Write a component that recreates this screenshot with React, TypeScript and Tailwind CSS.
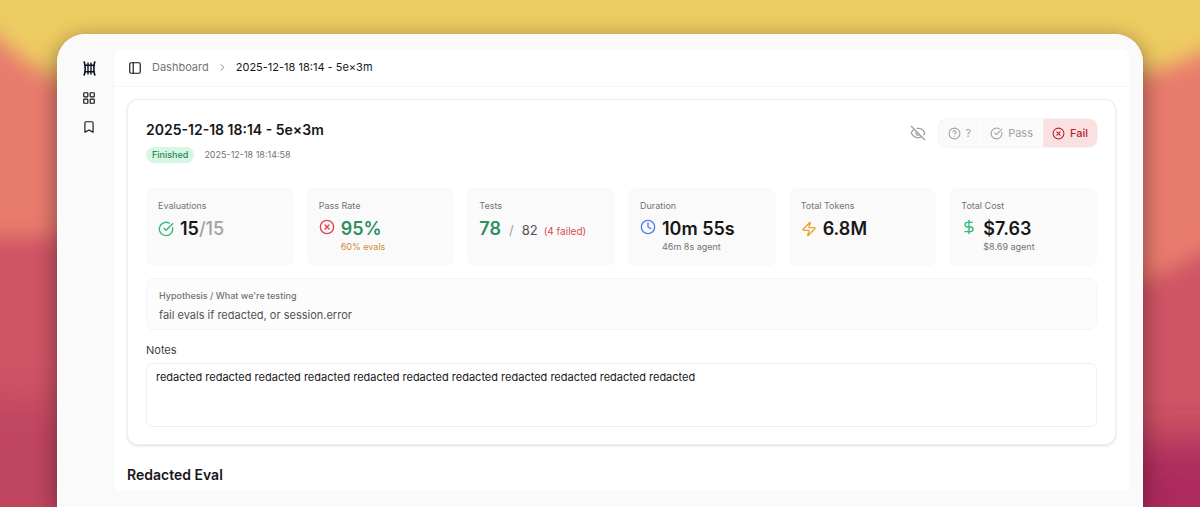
import type { ReactNode } from 'react';
import {
  Bookmark,
  ChevronRight,
  CircleCheckBig,
  CircleHelp,
  CircleX,
  Clock,
  DollarSign,
  EyeOff,
  LayoutGrid,
  PanelLeft,
  Zap,
} from 'lucide-react';
import { cva } from 'class-variance-authority';

const RUN_NAME = '2025-12-18 18:14 - 5e×3m';
const NOTES = Array(11).fill('redacted').join(' ');

export default function App() {
  return (
    <div className="relative flex min-h-screen flex-col overflow-hidden px-[57px] pt-[34px] font-['Inter','Liberation_Sans',sans-serif] text-neutral-900">
      <Wallpaper />
      <div className="relative flex flex-1 rounded-t-[28px] border-x border-t border-white bg-[#fafafa] pr-[13px] pt-[14px] pb-[17px] shadow-[0_6px_22px_rgba(40,10,20,0.5)]">
        <Sidebar />
        <div className="flex min-w-0 flex-1 flex-col rounded-t-lg border-l border-neutral-100 bg-white">
          <Header />
          <main className="flex flex-col gap-5 px-[13px] pt-3 pb-1">
            <RunCard />
            <h2 className="text-[14px] leading-5 font-semibold">Redacted Eval</h2>
          </main>
        </div>
      </div>
    </div>
  );
}

function Wallpaper() {
  return (
    <svg
      className="absolute inset-0 h-full w-full"
      viewBox="0 0 1200 507"
      preserveAspectRatio="none"
      aria-hidden
    >
      <defs>
        <filter id="soft" x="-20%" y="-20%" width="140%" height="140%">
          <feGaussianBlur stdDeviation="10" />
        </filter>
        <filter id="softer" x="-20%" y="-20%" width="140%" height="140%">
          <feGaussianBlur stdDeviation="22" />
        </filter>
      </defs>
      <rect width="1200" height="507" fill="#edcc62" />
      <path
        d="M-60 0 L0 40 C20 58 40 74 80 86 L1120 82 C1150 72 1175 66 1200 54 L1260 24 V600 H-60Z"
        fill="#e87b6d"
        filter="url(#soft)"
      />
      <path d="M-60 237 H90 L1110 288 C1150 280 1175 270 1200 254 L1260 220 V600 H-60Z" fill="#cf5565" filter="url(#soft)" />
      <path d="M-60 400 H60 L110 440 H600 V620 H-60Z" fill="#bf4461" filter="url(#softer)" />
      <path d="M600 440 H1140 L1260 438 V620 H600Z" fill="#ac2b5b" filter="url(#softer)" />
    </svg>
  );
}

function Logo() {
  return (
    <svg viewBox="0 0 13 15" className="h-[15px] w-[13px]" fill="none" stroke="#0b1020" aria-hidden>
      <path d="M.8 .5C2.600 3 2.600 12 .8 14.500M12.200 .5C10.400 3 10.400 12 12.200 14.500" strokeWidth="1.600" />
      <path d="M5 1.500v12M8 1.500v12" strokeWidth="1.400" />
      <path d="M1.500 4.200h10M1.500 10.800h10" strokeWidth="1.400" />
    </svg>
  );
}

function Sidebar() {
  return (
    <nav className="flex w-[55px] flex-col items-center gap-[15px] pt-3 pl-[7px]" aria-label="Main">
      <a href="#home" aria-label="Home">
        <Logo />
      </a>
      <a href="#dashboard" aria-label="Dashboard">
        <LayoutGrid className="size-[14px]" aria-hidden />
      </a>
      <a href="#bookmarks" aria-label="Bookmarks">
        <Bookmark className="size-[14px]" aria-hidden />
      </a>
    </nav>
  );
}

function Header() {
  return (
    <header className="flex h-[38px] items-center gap-[10px] border-b border-neutral-100 px-[14px] text-[11px]">
      <button type="button" aria-label="Toggle sidebar">
        <PanelLeft className="size-[14px]" aria-hidden />
      </button>
      <nav className="flex items-center gap-2" aria-label="Breadcrumb">
        <a href="#dashboard" className="text-neutral-500">
          Dashboard
        </a>
        <ChevronRight className="size-[11px] text-neutral-500" aria-hidden />
        <span aria-current="page">{RUN_NAME}</span>
      </nav>
    </header>
  );
}

function RunCard() {
  return (
    <section className="flex flex-col rounded-[11px] border border-neutral-200/60 bg-white px-[18px] pt-[18px] pb-[17px] shadow-sm">
      <div className="flex items-start justify-between">
        <div>
          <h1 className="text-[14px] leading-6 font-semibold">{RUN_NAME}</h1>
          <div className="mt-[5px] flex items-center gap-[10px] text-[9px] leading-4">
            <span className="rounded-full bg-[#d5f7e3] px-[6px] font-medium text-[#2f855a]">Finished</span>
            <time className="text-neutral-500">2025-12-18 18:14:58</time>
          </div>
        </div>
        <div className="flex items-center gap-[13px] pt-px">
          <button type="button" aria-label="Hide run" className="text-neutral-400">
            <EyeOff className="size-4" aria-hidden />
          </button>
          <VerdictPicker />
        </div>
      </div>

      <div className="mt-[25px] grid grid-cols-6 gap-[13px]">
        <Stat label="Evaluations" icon={<CircleCheckBig className="size-4 text-[#35b779]" aria-hidden />}>
          15<span className="font-medium text-neutral-400">/15</span>
        </Stat>
        <Stat
          label="Pass Rate"
          icon={<CircleX className="size-4 text-[#e0434f]" aria-hidden />}
          note={<span className="text-[#d08a2e]">60% evals</span>}
        >
          <span className="text-[#2f8f61]">95%</span>
        </Stat>
        <Stat label="Tests">
          <span className="text-[#2f8f61]">78</span>
          <span className="ml-2 text-[13px] font-normal text-neutral-400">/</span>
          <span className="ml-2 text-[13px] font-normal text-neutral-600">82</span>
          <span className="ml-[6px] text-[10px] font-normal text-[#dc4a50]">(4 failed)</span>
        </Stat>
        <Stat label="Duration" icon={<Clock className="size-4 text-[#4f7df0]" aria-hidden />} note="46m 8s agent">
          10m 55s
        </Stat>
        <Stat label="Total Tokens" icon={<Zap className="size-4 text-[#f0a030]" aria-hidden />}>
          6.8M
        </Stat>
        <Stat label="Total Cost" icon={<DollarSign className="size-4 text-[#35b779]" aria-hidden />} note="$8.69 agent">
          $7.63
        </Stat>
      </div>

      <div className="mt-3 rounded-lg border border-neutral-100 bg-[#fcfcfc] px-3 pt-[9px] pb-[5px]">
        <h3 className="text-[9px] leading-4 font-medium text-neutral-500">Hypothesis / What we&apos;re testing</h3>
        <p className="mt-[2px] text-[11px] leading-[18px] text-neutral-600">fail evals if redacted, or session.error</p>
      </div>

      <label htmlFor="notes" className="mt-[11px] text-[11px] leading-[18px] text-neutral-700">
        Notes
      </label>
      <textarea
        id="notes"
        defaultValue={NOTES}
        className="mt-1 block h-16 w-full resize-none rounded-md border border-neutral-200/60 px-[9px] py-[5px] text-[11px] leading-4 outline-none"
      />
    </section>
  );
}

const verdict = cva('flex h-full items-center gap-[5px] px-[9px]', {
  variants: {
    active: {
      true: 'bg-[#fae1e1] font-medium text-[#b3262b]',
      false: 'border-r border-white',
    },
  },
});

function VerdictPicker() {
  return (
    <div className="flex h-7 overflow-hidden rounded-lg bg-[#fafafa] text-[11px] text-neutral-400 ring-1 ring-neutral-100">
      <button type="button" className={verdict({ active: false })}>
        <CircleHelp className="size-[13px]" aria-hidden />?
      </button>
      <button type="button" className={verdict({ active: false })}>
        <CircleCheckBig className="size-[13px]" aria-hidden />
        Pass
      </button>
      <button type="button" aria-pressed className={verdict({ active: true })}>
        <CircleX className="size-[13px]" aria-hidden />
        Fail
      </button>
    </div>
  );
}

type StatProps = { label: string; icon?: ReactNode; note?: ReactNode; children: ReactNode };

function Stat({ label, icon, note, children }: StatProps) {
  return (
    <div className="h-[78px] rounded-lg bg-[#fafafa] px-3 pt-[10px]">
      <div className="text-[9px] leading-4 text-neutral-500">{label}</div>
      <div className="mt-1 flex items-start gap-[6px]">
        {icon && <span className={note ? 'pt-px' : 'pt-[3px]'}>{icon}</span>}
        <div>
          <div className="text-[18px] leading-[22px] font-semibold whitespace-nowrap">{children}</div>
          {note && <div className="text-[9px] leading-[14px] text-neutral-500">{note}</div>}
        </div>
      </div>
    </div>
  );
}
